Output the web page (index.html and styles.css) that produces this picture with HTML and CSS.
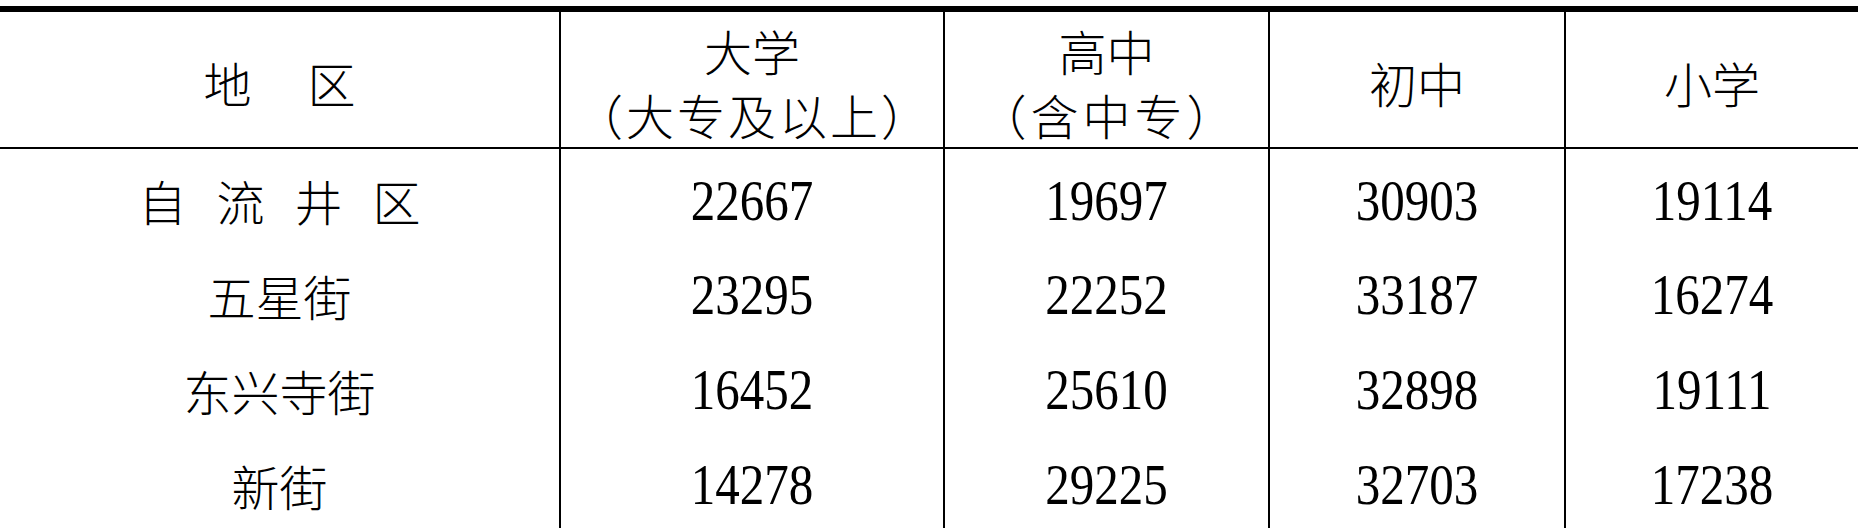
FILE: index.html
```html
<!DOCTYPE html>
<html lang="zh-CN">
<head>
<meta charset="utf-8">
<title>各地区受教育程度人口</title>
<link rel="stylesheet" href="styles.css">
</head>
<body>
<table class="edu">
  <colgroup>
    <col class="c-area">
    <col class="c-uni">
    <col class="c-high">
    <col class="c-mid">
    <col class="c-pri">
  </colgroup>
  <thead>
    <tr>
      <th><span class="spaced-wide">地区</span></th>
      <th><span class="hl">大学</span><span class="hl sub-a">（大专及以上）</span></th>
      <th><span class="hl">高中</span><span class="hl sub-b">（含中专）</span></th>
      <th>初中</th>
      <th>小学</th>
    </tr>
  </thead>
  <tbody>
    <tr>
      <td><span class="zh spaced">自流井区</span></td>
      <td><span class="num">22667</span></td>
      <td><span class="num">19697</span></td>
      <td><span class="num">30903</span></td>
      <td><span class="num">19114</span></td>
    </tr>
    <tr>
      <td><span class="zh">五星街</span></td>
      <td><span class="num">23295</span></td>
      <td><span class="num">22252</span></td>
      <td><span class="num">33187</span></td>
      <td><span class="num">16274</span></td>
    </tr>
    <tr>
      <td><span class="zh">东兴寺街</span></td>
      <td><span class="num">16452</span></td>
      <td><span class="num">25610</span></td>
      <td><span class="num">32898</span></td>
      <td><span class="num">19111</span></td>
    </tr>
    <tr>
      <td><span class="zh">新街</span></td>
      <td><span class="num">14278</span></td>
      <td><span class="num">29225</span></td>
      <td><span class="num">32703</span></td>
      <td><span class="num">17238</span></td>
    </tr>
  </tbody>
</table>
</body>
</html>
```

FILE: styles.css
```css
html, body {
  margin: 0;
  padding: 0;
  background: #ffffff;
  color: #000000;
}

body {
  padding-top: 6px;
  height: 524px;
  overflow: hidden;
}

.edu {
  width: 1858px;
  border-collapse: collapse;
  table-layout: fixed;
  border-top: 6px solid #000000;
}

.c-area { width: 560px; }
.c-uni  { width: 384px; }
.c-high { width: 325px; }
.c-mid  { width: 296px; }
.c-pri  { width: 293px; }

.edu th,
.edu td {
  padding: 0;
  text-align: center;
  vertical-align: middle;
  border-left: 2px solid #000000;
  font-weight: normal;
}

.edu th:first-child,
.edu td:first-child {
  border-left: none;
}

.edu thead th {
  height: 139px;
  padding-top: 4px;
  box-sizing: border-box;
  font-family: "Noto Sans CJK SC", sans-serif;
  font-weight: 300;
  font-size: 48px;
  line-height: 64px;
  border-bottom: 2px solid #000000;
}

.hl {
  display: block;
  line-height: 64px;
}

.sub-a {
  letter-spacing: 3px;
  padding-left: 3px;
}

.sub-b {
  letter-spacing: 4px;
  padding-left: 4px;
}

.edu tbody td {
  height: 95px;
  padding-top: 8px;
  box-sizing: border-box;
  font-size: 0;
  line-height: 0;
}

.zh {
  display: block;
  font-family: "Noto Sans CJK SC", sans-serif;
  font-weight: 300;
  font-size: 48px;
  line-height: 1;
}

.spaced {
  letter-spacing: 30px;
  padding-left: 30px;
}

.spaced-wide {
  letter-spacing: 56px;
  padding-left: 56px;
}

.num {
  display: block;
  font-family: "Liberation Serif", "Times New Roman", serif;
  font-size: 57px;
  line-height: 1;
  transform: scaleX(0.86);
}
```
